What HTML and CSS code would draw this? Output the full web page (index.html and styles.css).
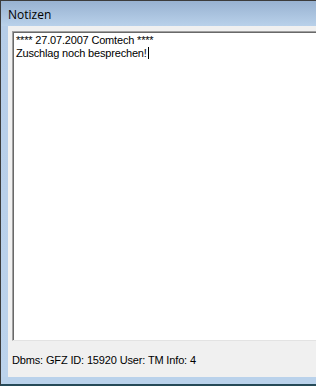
FILE: index.html
```html
<!DOCTYPE html>
<html>
<head>
<meta charset="utf-8">
<link rel="stylesheet" href="styles.css">
</head>
<body>
<div class="window">
  <div class="titlebar"><span class="title">Notizen</span></div>
  <div class="client-row">
    <div class="frame-left"></div>
    <div class="client">
      <div class="memo">
        <div class="line">**** 27.07.2007 Comtech ****</div>
        <div class="line">Zuschlag noch besprechen!<span class="caret"></span></div>
      </div>
      <div class="status">Dbms: GFZ ID: 15920 User: TM Info: 4</div>
    </div>
  </div>
  <div class="frame-bottom"></div>
</div>
</body>
</html>
```
FILE: styles.css
```css
html, body {
  margin: 0;
  padding: 0;
  width: 316px;
  height: 386px;
  overflow: hidden;
  background: #fff;
}
.window {
  width: 316px;
  height: 386px;
  box-sizing: border-box;
  border-top: 1px solid #3c3c3c;
  border-left: 1px solid #3c3c3c;
  border-bottom: 2px solid #254a58;
  display: flex;
  flex-direction: column;
  font-family: "Liberation Sans", Arial, sans-serif;
  color: #000;
}
.titlebar {
  height: 25px;
  flex: none;
  background: linear-gradient(#98b2d1, #b9d1ea);
  display: flex;
  align-items: center;
  padding-left: 7px;
}
.title {
  font-family: "Open Sans", "Liberation Sans", sans-serif;
  font-size: 12px;
  line-height: 14px;
  margin-top: 3px;
}
.client-row {
  flex: 1;
  display: flex;
}
.frame-left {
  width: 7px;
  flex: none;
  background: linear-gradient(#b6cde8, #bcd3ec);
}
.client {
  flex: 1;
  background: #f0f0f0;
  padding: 5px 0 0 4px;
  display: flex;
  flex-direction: column;
}
.memo {
  height: 310px;
  box-sizing: border-box;
  background: #fff;
  border-top: 1px solid #a0a0a0;
  border-left: 1px solid #a0a0a0;
  border-bottom: 1px solid #e3e3e3;
  box-shadow: inset 1px 1px 0 #696969;
  padding: 2px 0 0 3px;
  font-size: 11px;
  line-height: 13px;
  letter-spacing: -0.18px;
}
.caret {
  display: inline-block;
  width: 1px;
  height: 12px;
  background: #000;
  vertical-align: -2px;
  margin-left: 1px;
}
.status {
  font-size: 11px;
  line-height: 13px;
  letter-spacing: -0.15px;
  margin-top: 13px;
}
.frame-bottom {
  height: 7px;
  flex: none;
  background: #bad2eb;
}
```
